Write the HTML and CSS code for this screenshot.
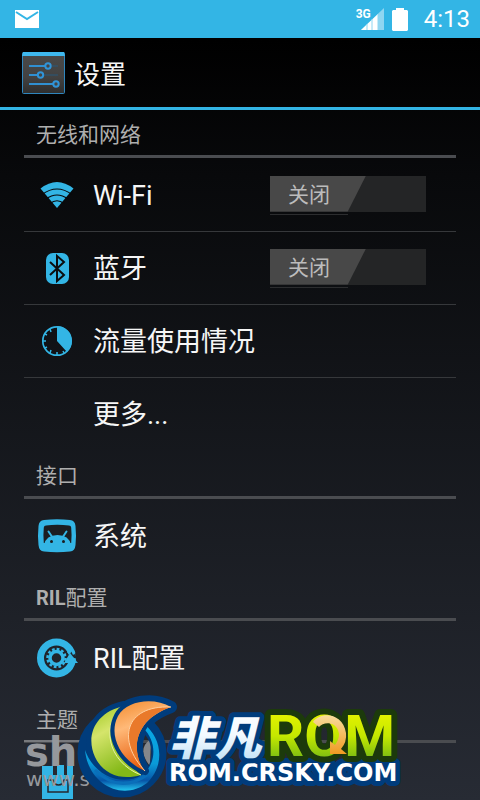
FILE: index.html
```html
<!DOCTYPE html>
<html lang="zh-CN">
    <head>
        <meta charset="utf-8">
        <title>设置</title>
        <link rel="stylesheet" href="styles.css">
    </head>
    <body>
        <div class="statusbar">
            <svg class="mail" width="24" height="18" viewBox="0 0 24 18"><rect width="24" height="18" fill="#fff"/><path d="M1 2l11 7 11-7" fill="none" stroke="#33b5e5" stroke-width="2"/></svg>
            <div class="signal">
                <span>3G</span>
                <svg width="23" height="22" viewBox="0 0 23 22"><path d="M0 22L23 0v22z" fill="#8fd6f1"/><path d="M0 22L17 6v16z" fill="#fff"/><path d="M6 16v6M11 11v11M17 6v16" stroke="#8fd6f1"/></svg>
            </div>
            <svg width="16" height="23" viewBox="0 0 16 23"><path d="M4 0h8v2h3l1 1v19l-1 1H1l-1-1V3l1-1h3z" fill="#fff"/></svg>
            <time>4:13</time>
        </div>
        <header>
            <svg width="44" height="42" viewBox="0 0 44 42">
                <defs>
                    <linearGradient id="tile" x2="0" y2="1"><stop offset="0" stop-color="#4a4a4a"/><stop offset=".6" stop-color="#424242"/><stop offset="1" stop-color="#2e2e2e"/></linearGradient>
                </defs>
                <rect x=".5" y=".5" width="42" height="41" rx="1" fill="url(#tile)" stroke="#2f86bd"/>
                <path d="M1 0h41l1 4H0z" fill="#3fb8ee"/>
                <path d="M7 14h16M7 23h9M7 32h24" stroke="#3090d2" stroke-width="2"/>
                <path d="M30 14h6M21 23h15" stroke="#29587a"/>
                <g fill="#444" stroke="#3094d8" stroke-width="2"><circle cx="26" cy="14" r="2.700"/><circle cx="18.500" cy="23" r="2.700"/><circle cx="34" cy="32" r="2.700"/></g>
            </svg>
            <h1>设置</h1>
        </header>
        <main>
            <h2>无线和网络</h2>
            <div class="row">
                <svg class="icon" viewBox="0 0 42 42">
                    <path d="M21 34L4.500 14.500Q21 1.500 37.500 14.500z" fill="#33b5e5"/>
                    <path d="M6 20.500Q21 9.500 36 20.500M10 25Q21 17 32 25M14 29.500Q21 24 28 29.500" fill="none" stroke="#08090b" stroke-width="1.200"/>
                </svg>
                <span class="name">Wi-Fi</span>
                <label class="switch"><input type="checkbox" aria-label="Wi-Fi"><span>关闭</span></label>
            </div>
            <div class="row">
                <svg class="icon" viewBox="0 0 42 42">
                    <rect x="10" y="6" width="23" height="31" rx="7" fill="#33b5e5"/>
                    <path d="M14 15l14 13-7 6V9l7 6-14 13" fill="none" stroke="#0b0d0f" stroke-width="2"/>
                </svg>
                <span class="name">蓝牙</span>
                <label class="switch"><input type="checkbox" aria-label="蓝牙"><span>关闭</span></label>
            </div>
            <div class="row">
                <svg class="icon" viewBox="0 0 42 42">
                    <circle cx="21" cy="21" r="14.200" fill="none" stroke="#33b5e5" stroke-width="1.700"/>
                    <path d="M21 21V6a15 15 0 0 1 10 26z" fill="#33b5e5"/>
                    <path d="M7 21h3M21 35v-3M14 9l1 3M9 14l2 1M9 28l2-1M14 33l1-3M28 33l-1-2" stroke="#33b5e5" stroke-width="1.500"/>
                </svg>
                <span class="name">流量使用情况</span>
            </div>
            <div class="row last">
                <span class="icon"></span>
                <span class="name">更多...</span>
            </div>

            <h2>接口</h2>
            <div class="row last">
                <svg class="icon" viewBox="0 0 42 42">
                    <path d="M8 5Q21 3.500 34 5q5 .5 5.500 6 1 9.500 0 19-.5 6-5.500 6.500-13 1.500-26 0-5-.5-5.500-6.500-1-9.500 0-19 .500-5.500 5.500-6z" fill="#33b5e5"/>
                    <path d="M10 10.500q11-1.500 23 0 2 .2 2.200 2 .8 8 0 15.500h-27.400q-.8-7.500 0-15.500.2-1.800 2.200-2z" fill="#1b1e22"/>
                    <path d="M8 30q2-10 13.500-10T35 30z" fill="#33b5e5"/>
                    <path d="M12.500 16.500l4 6M30.500 16.500l-4 6" stroke="#33b5e5" stroke-width="2" stroke-linecap="round"/>
                    <circle cx="15.500" cy="26.500" r="1.500" fill="#1b1e22"/><circle cx="27.500" cy="26.500" r="1.500" fill="#1b1e22"/>
                </svg>
                <span class="name">系统</span>
            </div>

            <h2><b>RIL</b>配置</h2>
            <div class="row last">
                <svg class="icon" viewBox="0 0 42 42">
                    <circle cx="20.500" cy="21" r="16" fill="none" stroke="#33b5e5" stroke-width="7"/>
                    <circle cx="20.500" cy="21" r="6.500" fill="none" stroke="#33b5e5" stroke-width="3.500"/>
                    <circle cx="20.500" cy="21" r="9" fill="none" stroke="#33b5e5" stroke-width="2.500" stroke-dasharray="2.700 2"/>
                    <path d="M30 19l5-5 2 4 3-2 2 6z" fill="#20242a"/>
                    <path d="M31 15l4-5 5 9-4-5-3 4z" fill="#33b5e5"/>
                    <path d="M28 26l6-10 8 10z" fill="#33b5e5"/>
                </svg>
                <span class="name">RIL配置</span>
            </div>

            <h2>主题</h2>
            <div class="row last">
                <svg class="icon" viewBox="0 0 42 42">
                    <path d="M6 7h11v9h4V6h7v10h3V7h6v33H6z" fill="#33b5e5"/>
                    <path d="M17 21h-5v12h20V21h-4q-1 5-5.500 5T17 21z" fill="none" stroke="#252930" stroke-width="1.500"/>
                </svg>
                <span class="name"></span>
            </div>
        </main>

        <!-- site watermark, lies over the list -->
        <svg class="watermark" width="390" height="110" viewBox="20 690 390 110">
            <defs>
                <linearGradient id="lime" x2="0" y2="1"><stop offset="0" stop-color="#f4f700"/><stop offset=".5" stop-color="#c4e800"/><stop offset="1" stop-color="#55a51c"/></linearGradient>
                <linearGradient id="leaf" x2=".4" y2="1"><stop offset="0" stop-color="#9cc61d"/><stop offset=".4" stop-color="#d5e56b"/><stop offset="1" stop-color="#83b817"/></linearGradient>
                <linearGradient id="flame" x2=".3" y2="1"><stop offset="0" stop-color="#f28a2d"/><stop offset=".4" stop-color="#ffb978"/><stop offset="1" stop-color="#e65c0c"/></linearGradient>
                <linearGradient id="ice" x2="0" y2="1"><stop offset="0" stop-color="#fff"/><stop offset=".5" stop-color="#f4faff"/><stop offset="1" stop-color="#b5dcf5"/></linearGradient>
                <linearGradient id="ring" x2="0" y2="1"><stop offset="0" stop-color="#08a8e6"/><stop offset=".6" stop-color="#0a9ad8"/><stop offset=".85" stop-color="#0756a8"/><stop offset="1" stop-color="#23c6f0"/></linearGradient>
                <linearGradient id="gold" x2="0" y2="1"><stop offset="0" stop-color="#f8dc9c"/><stop offset="1" stop-color="#f09a22"/></linearGradient>
            </defs>
            <path d="M24 741h60" stroke="#77797d" stroke-width="2"/>
            <text class="wm-grey wm-big" x="25" y="766">sh</text>
            <text class="wm-grey wm-url" x="26" y="786">www.s</text>
            <path d="M151 739q-15 10-1 27z" fill="#85878b"/>

            <g fill="none" stroke="#003c7c" stroke-linejoin="round">
                <circle cx="122" cy="753" r="37" stroke-width="15"/>
                <path d="M124 706C96 712 85 735 95 757C103 774 121 781 141 775C122 760 111 733 124 706z" fill="#003c7c" stroke-width="10"/>
                <path d="M171 707C154 697 127 700 118 716C108 735 120 760 145 771C135 760 126 723 171 707z" stroke-width="12"/>
            </g>
            <path d="M143 723C164 739 164 767 147 783C122 802 88 784 85 750C94 776 122 787 142 775C156 765 158 742 143 728z" fill="url(#ring)"/>
            <path d="M95 770q24 24 52 5" fill="none" stroke="#0a6fba" stroke-width="3"/>
            <path d="M124 706C96 712 85 735 95 757C103 774 121 781 141 775C122 760 111 733 124 706z" fill="url(#leaf)"/>
            <path d="M124 706C100 723 107 762 141 775C122 760 111 733 124 706z" fill="#a5cd2a"/>
            <path d="M124 706C100 723 107 762 141 775" fill="none" stroke="#e7f3a4"/>
            <path d="M171 707C154 697 127 700 118 716C108 735 120 760 145 771C135 760 126 723 171 707z" fill="#003c7c" stroke="#003c7c" stroke-width="8" stroke-linejoin="round"/>
            <path d="M171 707C154 697 127 700 118 716C108 735 120 760 145 771C135 760 126 723 171 707z" fill="url(#flame)"/>
            <path d="M171 707C124 705 117 741 145 771C135 760 126 723 171 707z" fill="#e9792a"/>
            <path d="M171 707C124 705 117 741 145 771" fill="none" stroke="#ffd0a0"/>

            <text class="wm-site" x="169" y="781">ROM.CRSKY.COM</text>
            <text class="wm-cn" x="169" y="755">非凡</text>
            <text class="wm-rom" x="267" y="756">ROM</text>
            <path d="M313 722C321 711 343 713 346 733Q347 742 341 749L347 754H330V741L335 745Q341 737 338 730C334 721 323 722 319 727z" fill="url(#gold)"/>
        </svg>
    </body>
</html>
```
FILE: styles.css
```css
*{
    margin: 0;
    box-sizing: border-box;
}
body{
    height: 100vh;
    display: flex;
    flex-direction: column;
    position: relative;
    overflow: hidden;
    background: linear-gradient(#000 5%, #08090b 22%, #272b34);
    color: #f6f6f6;
    font-family: Roboto, "Noto Sans CJK SC", sans-serif;
}
.statusbar{
    flex: none;
    display: flex;
    align-items: center;
    gap: 8px;
    height: 38px;
    padding: 0 10px 0 15px;
    background-color: #33b5e5;
    color: white;
}
.mail{
    margin-right: auto;
}
.signal{
    display: flex;
    align-items: flex-start;
}
.signal span{
    font-size: 12px;
    font-weight: bold;
    line-height: 12px;
    margin-right: -10px;
}
.statusbar time{
    font-size: 24px;
    margin-left: 8px;
}
header{
    flex: none;
    display: flex;
    align-items: center;
    gap: 8px;
    height: 72px;
    padding-left: 22px;
    border-bottom: 3px solid #33b5e5;
}
h1{
    font-size: 26px;
    font-weight: normal;
}
main{
    flex: none;
    padding: 0 24px;
}
h2{
    height: 48px;
    margin-bottom: 1px;
    padding-left: 12px;
    border-bottom: 3px solid #4a4c50;
    color: #aeaeae;
    font-size: 21px;
    font-weight: normal;
    line-height: 50px;
}
h2 b{
    font-size: 20px;
}
.row{
    display: flex;
    align-items: center;
    gap: 15px;
    height: 73px;
    padding: 0 30px 0 12px;
    border-bottom: 1px solid #36383b;
}
.row.last{
    border-bottom-color: transparent;
}
.icon{
    flex: none;
    width: 42px;
    height: 42px;
}
.name{
    flex: 1;
    padding-top: 2px;
    font-size: 27px;
    line-height: 40px;
}
.switch{
    display: grid;
    grid-template-rows: 36px 3px;
    width: 156px;
    background: linear-gradient(#242526, #242526) top / 100% 36px no-repeat;
}
.switch input,
.switch span{
    grid-area: 1 / 1;
}
.switch input{
    appearance: none;
    width: 96px;
    height: 36px;
    background-color: #484848;
    clip-path: polygon(0 0, 100% 0, 81% 100%, 0 100%);
}
.switch span{
    z-index: 1;
    padding-left: 18px;
    color: #bcbcbc;
    font-size: 21px;
    line-height: 38px;
}
.switch::after{
    content: "";
    width: 78px;
    height: 1px;
    margin-top: 2px;
    background-color: #2c2d2f;
}
.watermark{
    position: absolute;
    left: 20px;
    bottom: 0;
}
.wm-grey{
    fill: #96989c;
}
.wm-big{
    font: bold 40px "DejaVu Sans", sans-serif;
}
.wm-url{
    font: 20px "DejaVu Sans", sans-serif;
}
.wm-cn{
    font: italic 900 46px "Noto Sans CJK SC", sans-serif;
    fill: url(#ice);
    stroke: #003c7c;
    stroke-width: 10px;
    stroke-linejoin: round;
    paint-order: stroke;
}
.wm-site{
    font: bold 24px "DejaVu Sans", sans-serif;
    fill: white;
    stroke: #003c7c;
    stroke-width: 10px;
    stroke-linejoin: round;
    paint-order: stroke;
}
.wm-rom{
    font: bold 58px Roboto, sans-serif;
    fill: url(#lime);
    stroke: #1c3a0b;
    stroke-width: 12px;
    stroke-linejoin: round;
    paint-order: stroke;
}
```
